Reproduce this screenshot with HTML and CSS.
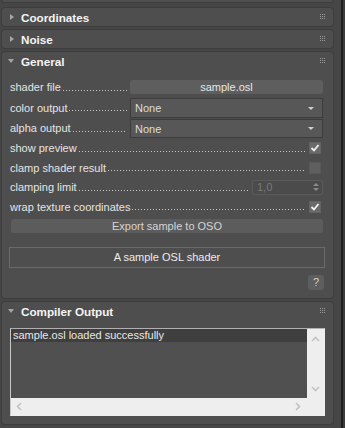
FILE: index.html
```html
<!DOCTYPE html>
<html lang="en">
<head>
    <meta charset="UTF-8">
    <meta name="viewport" content="width=device-width, initial-scale=1.0">
    <title>OSL Map</title>
    <link rel="stylesheet" href="styles.css">
</head>
<body>
    <div class="app">
        <div class="rollouts">
            <div class="panel stub"></div>

            <section class="panel">
                <div class="head"><span class="tri closed"></span><span class="title">Coordinates</span><span class="grip"></span></div>
            </section>

            <section class="panel">
                <div class="head"><span class="tri closed"></span><span class="title">Noise</span><span class="grip"></span></div>
            </section>

            <!-- General rollout -->
            <section class="panel">
                <div class="head"><span class="tri open"></span><span class="title">General</span><span class="grip"></span></div>
                <div class="body general">
                    <div class="row r1">
                        <span class="label">shader file</span><span class="dots"></span>
                        <button class="btn file-btn">sample.osl</button>
                    </div>
                    <div class="row r2">
                        <span class="label">color output</span><span class="dots"></span>
                        <div class="select h20"><span>None</span><span class="arrow"></span></div>
                    </div>
                    <div class="row r3">
                        <span class="label">alpha output</span><span class="dots"></span>
                        <div class="select h19"><span>None</span><span class="arrow"></span></div>
                    </div>
                    <div class="row r4">
                        <span class="label">show preview</span><span class="dots to-check"></span>
                        <span class="check on"><svg width="12" height="12" viewBox="0 0 12 12"><polyline points="2.5,6 5,8.5 9.5,3" fill="none" stroke="#f2f2f2" stroke-width="1.8"/></svg></span>
                    </div>
                    <div class="row r5">
                        <span class="label">clamp shader result</span><span class="dots to-check"></span>
                        <span class="check"></span>
                    </div>
                    <div class="row r6">
                        <span class="label">clamping limit</span><span class="dots to-spin"></span>
                        <div class="spinner"><span class="spin-val">1,0</span><span class="spin-arrows"><span class="up"></span><span class="down"></span></span></div>
                    </div>
                    <div class="row r7">
                        <span class="label">wrap texture coordinates</span><span class="dots to-check"></span>
                        <span class="check on"><svg width="12" height="12" viewBox="0 0 12 12"><polyline points="2.5,6 5,8.5 9.5,3" fill="none" stroke="#f2f2f2" stroke-width="1.8"/></svg></span>
                    </div>
                    <button class="btn export-btn">Export sample to OSO</button>
                    <div class="desc">A sample OSL shader</div>
                    <div class="help-row"><button class="btn help-btn">?</button></div>
                </div>
            </section>

            <!-- Compiler output rollout -->
            <section class="panel">
                <div class="head"><span class="tri open"></span><span class="title">Compiler Output</span><span class="grip"></span></div>
                <div class="body output">
                    <div class="textbox">
                        <div class="text-area"><div class="line sel">sample.osl loaded successfully</div></div>
                        <div class="vbar">
                            <svg width="9" height="6" viewBox="0 0 9 6"><polyline points="1,5 4.5,1.5 8,5" fill="none" stroke="#c2c2c2" stroke-width="1.6"/></svg>
                            <svg width="9" height="6" viewBox="0 0 9 6"><polyline points="1,1 4.5,4.5 8,1" fill="none" stroke="#c2c2c2" stroke-width="1.6"/></svg>
                        </div>
                        <div class="hbar">
                            <svg width="6" height="9" viewBox="0 0 6 9"><polyline points="5,1 1.5,4.5 5,8" fill="none" stroke="#c2c2c2" stroke-width="1.6"/></svg>
                            <svg width="6" height="9" viewBox="0 0 6 9"><polyline points="1,1 4.5,4.5 1,8" fill="none" stroke="#c2c2c2" stroke-width="1.6"/></svg>
                        </div>
                        <div class="corner"></div>
                    </div>
                </div>
            </section>
        </div>
        <div class="edge-dark"></div>
        <div class="edge"></div>
    </div>
</body>
</html>
```

FILE: styles.css
```css
body {
    margin: 0;
    background-color: #444444;
    font-family: "Liberation Sans", Arial, sans-serif;
    font-size: 11px;
    color: #e2e2e2;
    width: 345px;
    height: 428px;
    overflow: hidden;
}

.app {
    display: flex;
    height: 428px;
}

.rollouts {
    width: 341px;
    padding: 0 8px 0 2px;
    box-sizing: border-box;
    display: flex;
    flex-direction: column;
    gap: 4px;
    background-color: #464646;
}

.edge-dark {
    width: 2px;
    background-color: #1f1f1f;
}

.edge {
    flex: 1;
    background-color: #3c3c3c;
}

/* Rollout panels */
.panel {
    background-color: #4e4e4e;
    border-radius: 3px;
    box-shadow: 0 0 0 1px #3d3d3d;
}

.stub {
    height: 2px;
    border-radius: 0 0 3px 3px;
    margin-bottom: 2px;
}

.head {
    height: 18px;
    display: flex;
    align-items: center;
    padding-left: 6px;
}

.tri {
    width: 6px;
    display: flex;
    justify-content: center;
}

.tri.closed::before {
    content: "";
    border-left: 4px solid #a5a5a5;
    border-top: 3px solid transparent;
    border-bottom: 3px solid transparent;
    margin-left: 2px;
}

.tri.open::before {
    content: "";
    border-top: 4px solid #a5a5a5;
    border-left: 3px solid transparent;
    border-right: 3px solid transparent;
}

.title {
    margin-left: 7px;
    font-weight: bold;
    font-size: 11.7px;
    color: #f4f4f4;
}

.grip {
    width: 1px;
    height: 1px;
    margin-left: auto;
    margin-right: 12px;
    align-self: flex-start;
    margin-top: 6px;
    background-color: #9a9a9a;
    box-shadow: 2px 0 #9a9a9a, 4px 0 #9a9a9a, 0 2px #9a9a9a, 2px 2px #9a9a9a,
        4px 2px #9a9a9a, 0 4px #9a9a9a, 2px 4px #9a9a9a, 4px 4px #9a9a9a;
}

/* General */
.general {
    padding: 7px 10px 8px 8px;
    display: flex;
    flex-direction: column;
}

.row {
    display: flex;
    align-items: center;
    height: 20px;
}

.r2 { height: 21px; }
.r2 .select, .r3 .select { align-self: flex-end; }
.r5, .r7 { height: 19px; }

.label {
    white-space: nowrap;
    color: #e4e4e4;
}

.dots {
    flex: 1;
    height: 1px;
    margin: 6px 3px 0 2px;
    background: repeating-linear-gradient(to right, #c8c8c8 0 1px, transparent 1px 3px);
}

.dots.to-check { margin-right: 4px; }
.dots.to-spin { margin-right: 4px; }

.btn {
    font-family: inherit;
    font-size: 11px;
    border: none;
    padding: 0;
    background-color: #5e5e5e;
    color: #e6e6e6;
    border-radius: 3px;
}

.file-btn {
    width: 193px;
    height: 14px;
    line-height: 14px;
}

.select {
    width: 193px;
    box-sizing: border-box;
    border: 1px solid #3c3c3c;
    background-color: #575757;
    display: flex;
    align-items: center;
    padding-left: 4px;
    color: #dedede;
}

.h20 { height: 20px; }
.h19 { height: 19px; }

.arrow {
    margin-left: auto;
    margin-right: 8px;
    border-top: 3px solid #cfcfcf;
    border-left: 3px solid transparent;
    border-right: 3px solid transparent;
}

.check {
    width: 12px;
    height: 12px;
    box-sizing: border-box;
    background-color: #5f5f5f;
    border: 1px solid #575757;
    margin-right: 2px;
    display: flex;
}

.check.on {
    background-color: #6a6a6a;
    border-color: #626262;
}

.check svg {
    margin: -1px;
}

.spinner {
    width: 71px;
    height: 15px;
    box-sizing: border-box;
    border: 1px solid #5a5a5a;
    border-radius: 2px;
    background-color: #4b4b4b;
    display: flex;
    align-items: center;
    padding-left: 4px;
    color: #7a7a7a;
}

.spin-arrows {
    margin-left: auto;
    margin-right: 3px;
    display: flex;
    flex-direction: column;
    gap: 2px;
}

.spin-arrows .up {
    border-bottom: 3px solid #8a8a8a;
    border-left: 3px solid transparent;
    border-right: 3px solid transparent;
}

.spin-arrows .down {
    border-top: 3px solid #8a8a8a;
    border-left: 3px solid transparent;
    border-right: 3px solid transparent;
}

.export-btn {
    margin-top: 3px;
    margin-left: 1px;
    height: 14px;
    line-height: 14px;
    background-color: #5c5c5c;
    color: #d4d4d4;
}

.desc {
    margin: 14px -2px 0 -1px;
    height: 21px;
    box-sizing: border-box;
    border: 1px solid #6a6a6a;
    text-align: center;
    line-height: 19px;
    color: #ececec;
}

.help-row {
    margin-top: 7px;
    display: flex;
    justify-content: flex-end;
    margin-right: -1px;
}

.help-btn {
    width: 16px;
    height: 15px;
    line-height: 15px;
    color: #cfcfcf;
}

/* Compiler output */
.output {
    padding: 8px 8px 8px 8px;
}

.textbox {
    height: 88px;
    box-sizing: border-box;
    border: 1px solid #eeeeee;
    border-top-color: #b0b0b0;
    border-left-color: #c8c8c8;
    display: grid;
    grid-template-columns: 1fr 17px;
    grid-template-rows: 1fr 17px;
}

.text-area {
    background-color: #505050;
}

.line {
    height: 13px;
    line-height: 13px;
    padding-left: 2px;
    color: #e8e8e8;
}

.line.sel {
    background-color: #3f3f3f;
}

.vbar {
    background-color: #eeeeee;
    display: flex;
    flex-direction: column;
    justify-content: space-between;
    align-items: center;
    padding: 7px 0 6px;
}

.hbar {
    background-color: #eeeeee;
    display: flex;
    justify-content: space-between;
    align-items: center;
    padding: 0 6px 0 5px;
}

.corner {
    background-color: #eeeeee;
}
```
